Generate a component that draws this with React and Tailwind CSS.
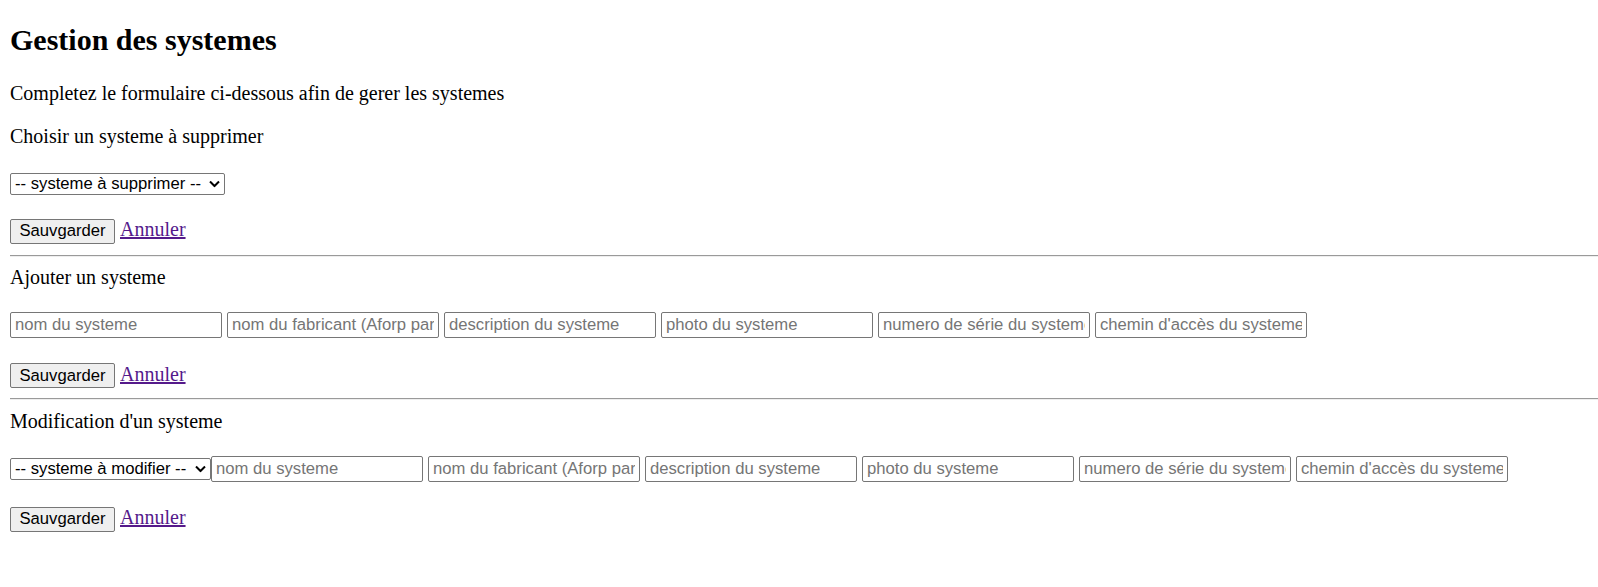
import React from 'react';

const champs = [
  'nom du systeme',
  'nom du fabricant (Aforp par défaut)',
  'description du systeme',
  'photo du systeme',
  'numero de série du systeme',
  "chemin d'accès du systeme",
];

const Chevron = () => (
  <svg
    className="pointer-events-none absolute right-[5px] top-1/2 -translate-y-1/2"
    width="11"
    height="7"
    viewBox="0 0 11 7"
    fill="none"
  >
    <path d="M1 1l4.5 4.5L10 1" stroke="#000" strokeWidth="2" />
  </svg>
);

const Choix = ({ label, width }) => (
  <div className={`relative shrink-0 ${width}`}>
    <select className="h-[22px] w-full appearance-none rounded-[2px] border border-[#767676] bg-white pl-[4px] pr-[20px] font-['Liberation_Sans',Arial,sans-serif] text-[16.67px] leading-[20px] text-black">
      <option>{label}</option>
    </select>
    <Chevron />
  </div>
);

const Champ = ({ placeholder }) => (
  <input
    type="text"
    placeholder={placeholder}
    className="h-[26px] w-[212px] shrink-0 rounded-[2px] border border-[#767676] bg-white px-[4px] font-['Liberation_Sans',Arial,sans-serif] text-[16.67px] text-black placeholder:text-[#757575]"
  />
);

const Actions = ({ className }) => (
  <div className={`flex items-baseline gap-[5px] ${className}`}>
    <button
      type="button"
      className="h-[25px] w-[105px] rounded-[2px] border border-[#767676] bg-[#efefef] font-['Liberation_Sans',Arial,sans-serif] text-[16.67px] leading-[20px] text-black"
    >
      Sauvgarder
    </button>
    <a href="#" className="text-[20px] leading-[23px] text-[#551a8b] underline">
      Annuler
    </a>
  </div>
);

const Separateur = ({ className }) => (
  <hr className={`border-0 border-t border-b border-t-[#9a9a9a] border-b-[#eeeeee] ${className}`} />
);

const App = () => {
  return (
    <div className="min-h-screen bg-white pl-[10px] pb-[40px] font-['Liberation_Serif','Times_New_Roman',serif] text-black">
      <h2 className="pt-[23px] text-[30px] font-bold leading-[34px]">Gestion des systemes</h2>
      <p className="mt-[25px] text-[20px] leading-[23px]">
        Completez le formulaire ci-dessous afin de gerer les systemes
      </p>

      <p className="mt-[20px] text-[20px] leading-[23px]">Choisir un systeme à supprimer</p>
      <div className="mt-[24px] flex">
        <Choix label="-- systeme à supprimer --" width="w-[215px]" />
      </div>
      <Actions className="mt-[22px]" />

      <Separateur className="mt-[11px]" />
      <p className="mt-[9px] text-[20px] leading-[23px]">Ajouter un systeme</p>
      <div className="mt-[23px] flex gap-[5px]">
        {champs.map((c) => (
          <Champ key={c} placeholder={c} />
        ))}
      </div>
      <Actions className="mt-[25px]" />

      <Separateur className="mt-[10px]" />
      <p className="mt-[10px] text-[20px] leading-[23px]">Modification d'un systeme</p>
      <div className="mt-[23px] flex items-center">
        <Choix label="-- systeme à modifier --" width="w-[201px]" />
        <div className="flex gap-[5px]">
          {champs.map((c) => (
            <Champ key={c} placeholder={c} />
          ))}
        </div>
      </div>
      <Actions className="mt-[24px]" />
    </div>
  );
};

export default App;
